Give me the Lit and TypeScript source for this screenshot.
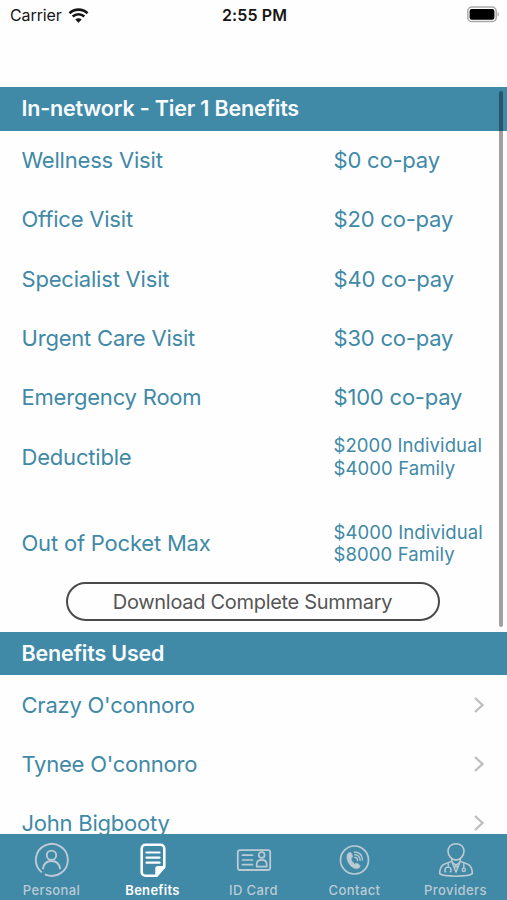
import { LitElement, html, css, svg } from "lit";
import { customElement } from "lit/decorators.js";

interface Benefit {
  name: string;
  value: string[];
}

const BENEFITS: Benefit[] = [
  { name: "Wellness Visit", value: ["$0 co-pay"] },
  { name: "Office Visit", value: ["$20 co-pay"] },
  { name: "Specialist Visit", value: ["$40 co-pay"] },
  { name: "Urgent Care Visit", value: ["$30 co-pay"] },
  { name: "Emergency Room", value: ["$100 co-pay"] },
  { name: "Deductible", value: ["$2000 Individual", "$4000 Family"] },
  { name: "Out of Pocket Max", value: ["$4000 Individual", "$8000 Family"] },
];

const MEMBERS = ["Crazy O'connoro", "Tynee O'connoro", "John Bigbooty"];

const TABS = [
  {
    label: "Personal",
    icon: svg`<path d="M8.3 30.9A16 16 0 1 1 12.6 33.6M5.600 28l.1.1" stroke-width="1.9"/>
      <circle cx="18.500" cy="14.300" r="4.700" stroke-width="1.9"/>
      <path d="M10 27.500c.8-4.900 3.600-7.500 8.500-7.500s7.700 2.600 8.500 7.500" stroke-width="1.9"/>`,
  },
  {
    label: "Benefits",
    icon: svg`<path d="M11.500 3.700h15a3.800 3.800 0 0 1 3.800 3.800v18.500l-7.800 8.800H11.500a3.800 3.800 0 0 1-3.800-3.800V7.500a3.800 3.800 0 0 1 3.800-3.800z" stroke-width="2.600"/>
      <path d="M22 34.800V27.500a1.800 1.800 0 0 1 1.800-1.800h6.500v.8z" fill="currentColor" stroke-width="1.500"/>
      <path d="M12.500 11.500h13M12.500 16.600h13M12.500 21.700h13" stroke-width="2.200"/>`,
  },
  {
    label: "ID Card",
    icon: svg`<rect x="2.800" y="9.200" width="32.400" height="19.800" rx="2.200" stroke-width="1.800"/>
      <path d="M7.500 14.200h10M7.500 19h10M7.500 23.700h10" stroke-width="1.700"/>
      <circle cx="26.700" cy="13.900" r="2.900" stroke-width="1.700"/>
      <path d="M21.700 25.700v-2.300c0-3 1.700-4.500 5-4.500s5 1.500 5 4.500v2.300z" stroke-width="1.700"/>`,
  },
  {
    label: "Contact",
    icon: svg`<circle cx="18.500" cy="19" r="14" stroke-width="1.700"/>
      <path d="M12.200 12.200c1.300-1.200 2.800-1 3.400.4l.9 2.300c.5 1.200-.8 1.900-1.400 2.700.3 2 1.700 4.300 3.500 5.400 1-.2 1.900-1.200 3-.5l1.900 1.400c1.100.9.600 2.400-.8 3.200-3.300 1.800-7.500-.8-9.900-4.800-2.200-3.700-2.700-8.200-.6-10.100z" fill="currentColor" stroke-width=".5"/>
      <path d="M18.700 16.300c1.800.1 2.900 1.300 3 3.200M18.500 13.600c3.600.2 5.500 2.400 5.700 5.800M18.400 11c5 .2 7.900 3.200 8.100 8" stroke-width="1.300"/>`,
  },
  {
    label: "Providers",
    icon: svg`<path d="M19 2.700c4.700 0 8 3.100 8 7.200 0 5-3.800 9.200-8 9.200s-8-4.200-8-9.200c0-4.100 3.300-7.200 8-7.200z" stroke-width="1.600"/>
      <path d="M14.800 18.200v2.200c-3 1.400-6.300 1.500-8.800 3.500-2.300 1.900-3.300 5.400-3.300 8.800 3.500 3.300 29.100 3.300 32.600 0 0-3.400-1-6.900-3.300-8.800-2.500-2-5.800-2.100-8.800-3.500v-2.200" stroke-width="1.600"/>
      <path d="M14.800 20.400l4.200 10.900 4.200-10.900M16.300 22l2.700 2.300 2.700-2.300M18.300 24.500l-.8 3.500M19.700 24.500l.8 3.500" stroke-width="1.400"/>
      <path d="M11.200 22.300v3.700M8.800 30.800H8v-1.800c0-3.900 6-3.900 6 0v1.800h-.8M26.800 22.100v4.700" stroke-width="1.400"/>
      <circle cx="26.800" cy="28.800" r="1.700" stroke-width="1.300"/>`,
  },
];

@customElement("app-root")
export class AppRoot extends LitElement {
  static styles = css`
    :host {
      display: flex;
      flex-direction: column;
      position: relative;
      width: 507px;
      height: 900px;
      overflow: hidden;
      background: #fefefe;
      color: #4089a7;
      font-family: Inter, "Liberation Sans", sans-serif;
    }
    * { box-sizing: border-box; }
    svg { display: block; fill: none; stroke: currentColor; stroke-linecap: round; stroke-linejoin: round; }
    .status {
      display: grid;
      grid-template-columns: 1fr auto 1fr;
      align-items: center;
      flex: none;
      height: 87px;
      padding: 0 8px 57px 10px;
      color: #161616;
      font-size: 16px;
      line-height: 30px;
    }
    .carrier { display: flex; align-items: center; gap: 6px; letter-spacing: -0.1px; }
    .time { font-weight: 600; letter-spacing: 0.1px; }
    .battery { justify-self: end; }
    .content { flex: 1; min-height: 0; overflow: hidden; }
    .heading {
      height: 43.500px;
      margin: 0;
      padding-left: 21.500px;
      background: #4089a7;
      color: #f8fcff;
      font-size: 21.500px;
      font-weight: 600;
      line-height: 43.500px;
      letter-spacing: -0.19px;
    }
    .row {
      display: grid;
      grid-template-columns: 312px 1fr;
      align-items: center;
      height: 59.300px;
      padding-left: 21.500px;
      font-size: 22px;
      letter-spacing: -0.2px;
      white-space: nowrap;
    }
    .row.last { margin-top: 27px; }
    .pair { padding-top: 1px; font-size: 18.500px; line-height: 22.700px; letter-spacing: 0.1px; }
    .member {
      display: flex;
      align-items: center;
      justify-content: space-between;
      height: 59.300px;
      padding: 0 22px 0 21.500px;
      font-size: 22px;
      letter-spacing: -0.23px;
    }
    .chevron { color: #bdbdbf; }
    .download {
      display: block;
      width: 374px;
      height: 39px;
      margin: 9.500px auto 10.500px 65.500px;
      padding: 0;
      border: 2.500px solid #4a4a4a;
      border-radius: 20px;
      background: transparent;
      color: #555;
      font: inherit;
      font-size: 20px;
      letter-spacing: -0.3px;
    }
    .scroll {
      position: absolute;
      top: 91px;
      right: 4px;
      width: 4px;
      height: 536px;
      border-radius: 2px;
      background: rgba(0, 0, 0, 0.37);
    }
    .tabs {
      display: grid;
      grid-template-columns: repeat(5, 101px);
      flex: none;
      height: 66.500px;
      padding: 7px 1px 0;
      background: #4089a7;
    }
    .tab {
      display: flex;
      flex-direction: column;
      align-items: center;
      color: #bccbd3;
      font-size: 13px;
      font-weight: 500;
      line-height: 16px;
      letter-spacing: 0.4px;
    }
    .tab svg { margin-bottom: 4px; }
    .tab.active { color: #fff; font-weight: 600; letter-spacing: 0.3px; }
  `;

  private renderBenefit(b: Benefit, index: number) {
    const last = index === BENEFITS.length - 1;
    return html`<div class="row ${last ? "last" : ""}">
      <span>${b.name}</span>
      <div class=${b.value.length > 1 ? "pair" : ""}>${b.value.map((v) => html`<div>${v}</div>`)}</div>
    </div>`;
  }

  render() {
    return html`
      <div class="status">
        <div class="carrier">
          <span>Carrier</span>
          <svg width="21" height="15" viewBox="0 0 21 15">
            <path d="M1.500 5.200c5-4.700 13-4.700 18 0M4.700 8.500c3.300-3 8.300-3 11.600 0" stroke-width="2.700" stroke-linecap="butt"/>
            <path d="M10.500 14.700L7.300 11.400c1.700-1.500 4.700-1.500 6.400 0z" fill="currentColor" stroke="none"/>
          </svg>
        </div>
        <div class="time">2:55 PM</div>
        <svg class="battery" width="33" height="18" viewBox="0 0 33 18">
          <rect x="1.800" y="1" width="28.400" height="14.600" rx="4.200" stroke="#aaa" stroke-width="1.500"/>
          <rect x="3.600" y="2.900" width="24.800" height="10.800" rx="2.300" fill="#000" stroke="none"/>
          <path d="M31.600 6.200c1.800.6 1.800 3.600 0 4.200z" fill="#aaa" stroke="none"/>
        </svg>
      </div>
      <div class="content">
        <h2 class="heading">In-network - Tier 1 Benefits</h2>
        ${BENEFITS.map((b, i) => this.renderBenefit(b, i))}
        <button class="download">Download Complete Summary</button>
        <h2 class="heading">Benefits Used</h2>
        ${MEMBERS.map(
          (m) => html`<div class="member">
            <span>${m}</span>
            <svg class="chevron" width="12" height="18" viewBox="0 0 12 18">
              <path d="M2 2l7.500 7L2 16" stroke-width="2.300" stroke-linecap="butt" stroke-linejoin="miter"/>
            </svg>
          </div>`
        )}
      </div>
      <div class="scroll"></div>
      <nav class="tabs">
        ${TABS.map(
          (t) => html`<div class="tab ${t.label === "Benefits" ? "active" : ""}">
            <svg width="37" height="37" viewBox="0 0 37 37">${t.icon}</svg>
            <span>${t.label}</span>
          </div>`
        )}
      </nav>
    `;
  }
}
